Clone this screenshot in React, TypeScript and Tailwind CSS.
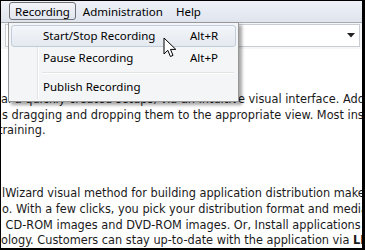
import React from "react";

const ui = { fontFamily: '"Noto Sans", "Liberation Sans", sans-serif' };
const body = { fontFamily: '"DejaVu Sans Condensed", "DejaVu Sans", sans-serif' };

function Cursor() {
  return (
    <svg width="15" height="22" viewBox="0 0 15 22" className="absolute left-[162px] top-[36px]">
      <path d="M1 1 L1 17 L4.8 13.3 L7.4 19.5 L10 18.4 L7.5 12.4 L12.8 12.4 Z" fill="white" stroke="black" strokeWidth="1" strokeLinejoin="miter" />
    </svg>
  );
}

export default function App() {
  const lines: { t: React.ReactNode; ml: number }[] = [
    { t: "al a quickly created setups, via an intuitive visual interface. Adding", ml: 0 },
    { t: "s dragging and dropping them to the appropriate view. Most ins", ml: 1 },
    { t: "training.", ml: -3 },
    { t: "\u00a0", ml: 0 },
    { t: "\u00a0", ml: 0 },
    { t: "\u00a0", ml: 0 },
    { t: "lWizard visual method for building application distribution makes", ml: 1 },
    { t: "o. With a few clicks, you pick your distribution format and media", ml: 1 },
    { t: "\u00a0CD-ROM images and DVD-ROM images. Or, Install applications", ml: 1 },
    {
      t: (
        <>
          ology. Customers can stay up-to-date with the application via <b>LIVE</b>
        </>
      ),
      ml: 0,
    },
  ];
  return (
    <div className="w-[365px] h-[250px] bg-black pt-px pl-px pr-[3px] pb-[2px]">
      <div className="relative w-full h-full bg-white overflow-hidden flex flex-col">
        {/* menu bar */}
        <div
          className="h-[22px] flex items-center text-[11.5px] text-black bg-gradient-to-b from-[#eef1f7] to-[#dfe4ee] border-b border-[#a7abb0]"
          style={ui}
        >
          <div className="ml-[8px] h-[18px] px-[5px] pt-[1px] flex items-center rounded-[3px] border border-[#6f7277] bg-gradient-to-b from-[#f2f4f8] to-[#e2e6ee]">
            Recording
          </div>
          <div className="ml-[7px] pt-[1px]">Administration</div>
          <div className="ml-[13px] pt-[1px]">Help</div>
        </div>
        {/* toolbar with combobox */}
        <div className="h-[27px] bg-[#f5f6f7] flex items-center pl-[4px] pr-[2px]">
          <div className="flex-1 h-[23px] bg-white border border-[#c9ccd1] flex items-center justify-end pr-[4px]">
            <svg width="8" height="5" viewBox="0 0 8 5">
              <path d="M0 0 L8 0 L4 4.5 Z" fill="#222" />
            </svg>
          </div>
        </div>
        {/* content */}
        <div className="flex-1 pt-[42px] text-[12.6px] leading-[15.7px] text-[#1a1a1a] whitespace-nowrap" style={body}>
          {lines.map((l, i) => (
            <div key={i} style={{ marginLeft: l.ml }}>
              {l.t}
            </div>
          ))}
        </div>

        {/* dropdown menu */}
        <div
          className="absolute left-[7px] top-[21px] w-[231px] h-[80px] bg-[#f4f5f6] border border-[#979797] shadow-[3px_3px_3px_rgba(0,0,0,0.35)] text-[11.5px] text-black"
          style={ui}
        >
          <div className="absolute left-[28px] top-[2px] bottom-[2px] w-px bg-[#e2e3e3]" />
          <div className="absolute left-[29px] top-[2px] bottom-[2px] w-px bg-white" />
          <div className="relative flex flex-col pt-[2px] px-[2px]">
            <div className="h-[22px] flex items-center rounded-[3px] border border-[#c2cddb] bg-gradient-to-b from-[#f3f6fa] to-[#e4e9f0]">
              <span className="ml-[31px] w-[147px]">Start/Stop Recording</span>
              <span>Alt+R</span>
            </div>
            <div className="h-[22px] flex items-center border border-transparent">
              <span className="ml-[31px] w-[147px]">Pause Recording</span>
              <span>Alt+P</span>
            </div>
            <div className="h-[7px] flex items-center">
              <div className="ml-[31px] mr-[2px] flex-1 h-[2px] border-t border-[#e2e3e3] border-b border-b-white" />
            </div>
            <div className="h-[22px] flex items-center border border-transparent">
              <span className="ml-[31px]">Publish Recording</span>
            </div>
          </div>
        </div>
        <Cursor />
      </div>
    </div>
  );
}
